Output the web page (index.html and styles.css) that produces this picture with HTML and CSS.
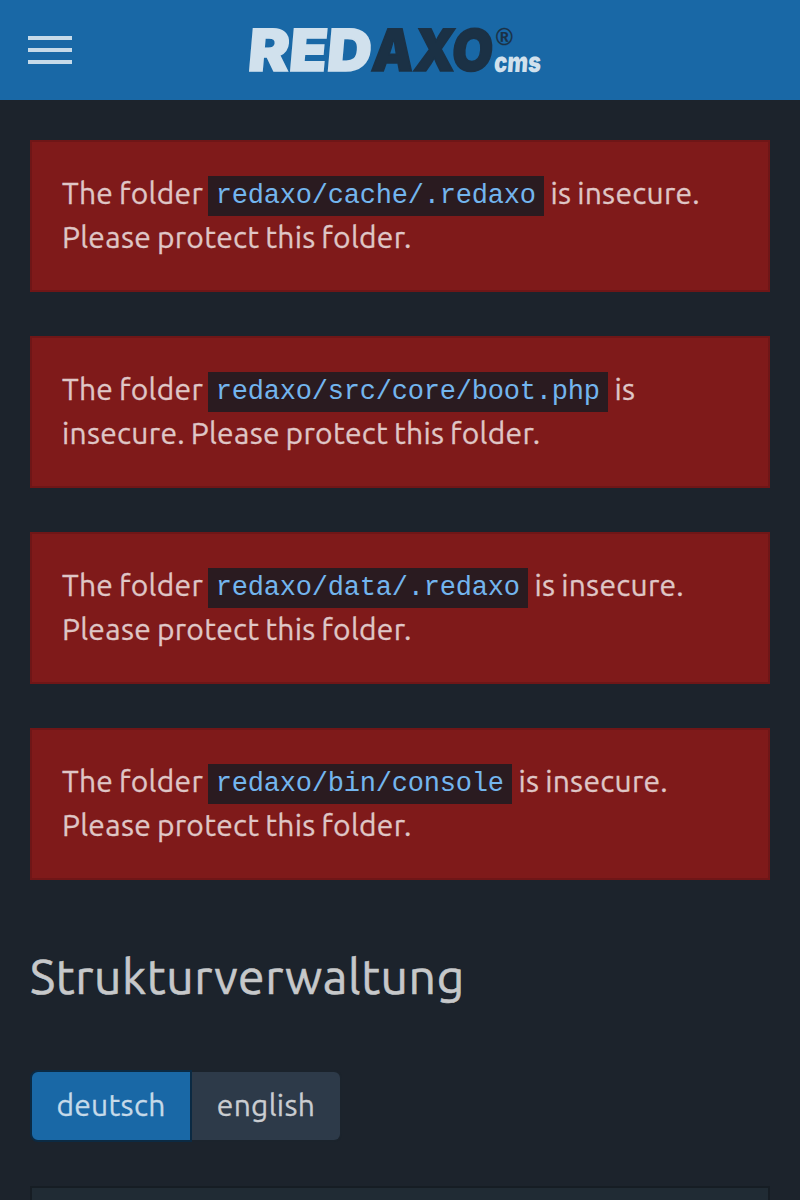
FILE: index.html
```html
<!DOCTYPE html>
<html lang="de">
<head>
<meta charset="utf-8">
<title>Strukturverwaltung</title>
<link rel="stylesheet" href="styles.css">
</head>
<body>
<header class="topbar">
  <button class="menu" aria-label="Menu"><span class="menu-bar"></span><span class="menu-bar"></span><span class="menu-bar"></span></button>
  <svg class="logo" width="320" height="100" viewBox="245 0 320 100" role="img" aria-label="REDAXO CMS">
    <g class="logo-word" transform="translate(0 71.3) skewX(-5)">
      <text class="logo-light" x="247" y="0" textLength="123" lengthAdjust="spacingAndGlyphs">RED</text>
      <text class="logo-dark" x="370.5" y="0" textLength="121" lengthAdjust="spacingAndGlyphs">AXO</text>
    </g>
    <text class="logo-reg" x="495.5" y="44.5">®</text>
    <g transform="translate(0 72) skewX(-4)">
      <text class="logo-cms" x="493.5" y="0" textLength="47" lengthAdjust="spacingAndGlyphs">cms</text>
    </g>
  </svg>
</header>
<main class="content">
  <div class="alert">The folder <code>redaxo/cache/.redaxo</code> is insecure. Please protect this folder.</div>
  <div class="alert">The folder <code>redaxo/src/core/boot.php</code> is insecure. Please protect this folder.</div>
  <div class="alert">The folder <code>redaxo/data/.redaxo</code> is insecure. Please protect this folder.</div>
  <div class="alert">The folder <code>redaxo/bin/console</code> is insecure. Please protect this folder.</div>
  <h1 class="title">Strukturverwaltung</h1>
  <nav class="languages">
    <a class="lang lang-active">deutsch</a>
    <a class="lang lang-other">english</a>
  </nav>
  <section class="panel"></section>
</main>
</body>
</html>
```
FILE: styles.css
```css
* { box-sizing: border-box; }
body {
  margin: 0;
  height: 1200px;
  background: #1c232c;
  color: #c6c8ca;
  font: 400 30px/44px Ubuntu, "Noto Sans", sans-serif;
  -webkit-text-stroke: .3px;
}
.topbar {
  display: flex;
  align-items: center;
  height: 100px;
  padding-left: 28px;
  background: #1968a6;
}
.menu {
  display: flex;
  flex-direction: column;
  gap: 8px;
  width: 44px;
  padding: 0;
  border: 0;
  background: none;
}
.menu-bar { height: 4px; background: #c6dae9; }
.logo { margin-left: 173px; overflow: visible; }
.logo text { font-family: Inter, sans-serif; font-weight: 900; }
.logo .logo-word text { font-size: 58px; stroke-width: 1.6; }
.logo .logo-light { fill: #d1e1ed; stroke: #d1e1ed; }
.logo .logo-dark { fill: #1b3145; stroke: #1b3145; }
.logo .logo-reg { font-family: "Liberation Sans", sans-serif; font-size: 23px; font-style: italic; font-weight: 700; fill: #1b3145; stroke: #1b3145; stroke-width: .2; }
.logo .logo-cms { font-size: 28px; fill: #d1e1ed; }
.content { padding: 40px 30px 0; }
.alert {
  height: 152px;
  margin-bottom: 44px;
  padding: 29px 30px 31px;
  border: 2px solid #6f1617;
  background: #7f1a1a;
  color: #dfc6c6;
  letter-spacing: .28px;
  word-spacing: -1.3px;
}
code {
  margin: 0 .8px 0 -1.2px;
  padding: 5px 8px;
  background: #2a1b20;
  color: #73b5ee;
  font: 27px/1 "Liberation Mono", monospace;
  letter-spacing: -.2px;
  vertical-align: 1px;
  -webkit-text-stroke: 0;
}
.title {
  margin: 0;
  padding-top: 25px;
  font-size: 48px;
  line-height: 55px;
  font-weight: 400;
  letter-spacing: .6px;
  -webkit-text-stroke: .6px;
}
.languages { display: flex; margin-top: 66px; }
.lang {
  display: flex;
  align-items: center;
  justify-content: center;
  height: 72px;
  padding-bottom: 2px;
  border: 2px solid #0b2a43;
  letter-spacing: .3px;
}
.lang-active { width: 162px; border-radius: 8px 0 0 8px; background: #1968a6; color: #c6dae9; }
.lang-other { width: 150px; border-color: #1b232c; border-left: 0; border-radius: 0 8px 8px 0; background: #2d3a49; color: #cacdd1; }
.panel { height: 14px; margin-top: 44px; border: 2px solid #161d24; border-bottom: 0; background: #202b34; }
```
